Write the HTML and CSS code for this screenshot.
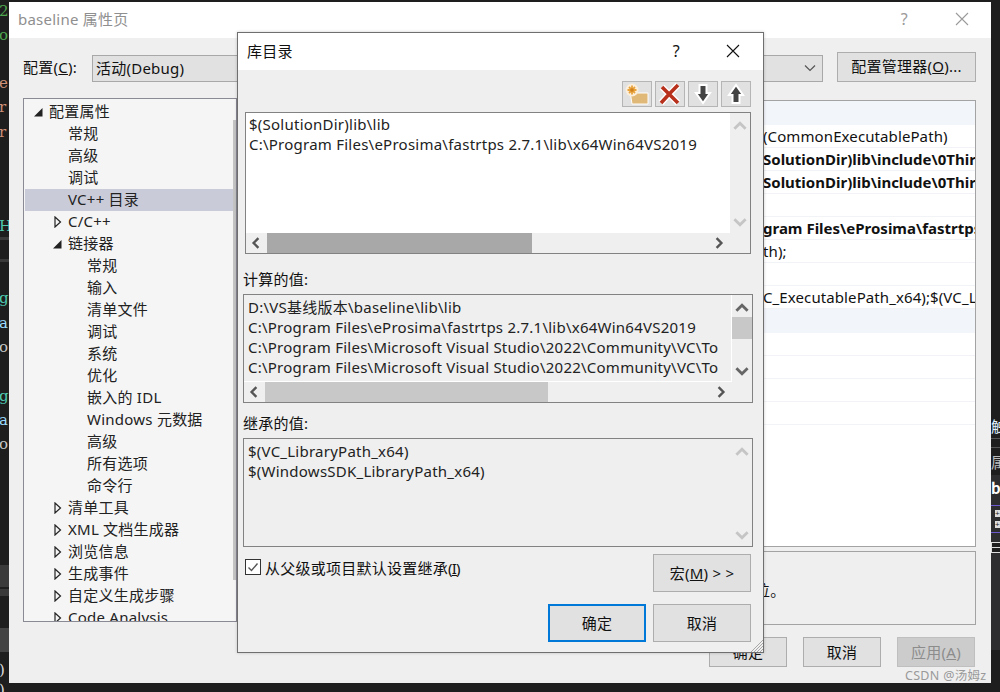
FILE: index.html
```html
<!DOCTYPE html>
<html lang="zh">
<head>
<meta charset="utf-8">
<title>baseline 属性页</title>
<link rel="stylesheet" href="styles.css">
</head>
<body>
<svg class="defs" width="0" height="0" aria-hidden="true">
  <symbol id="open" viewBox="0 0 8 12"><path d="M1 1 L6.5 6 L1 11 Z" fill="none" stroke="#222" stroke-width="1.2"/></symbol>
  <symbol id="down" viewBox="0 0 9 9"><path d="M0 8.5 H8.5 V0 Z" fill="#222"/></symbol>
  <symbol id="cl" viewBox="0 0 10 10"><path d="M7 1 L3 5 L7 9" fill="none" stroke="currentColor" stroke-width="2"/></symbol>
  <symbol id="cr" viewBox="0 0 10 10"><path d="M3 1 L7 5 L3 9" fill="none" stroke="currentColor" stroke-width="2"/></symbol>
  <symbol id="cu" viewBox="0 0 10 10"><path d="M1 7 L5 3 L9 7" fill="none" stroke="currentColor" stroke-width="2"/></symbol>
  <symbol id="cd" viewBox="0 0 10 10"><path d="M1 3 L5 7 L9 3" fill="none" stroke="currentColor" stroke-width="2"/></symbol>
</svg>

<div class="strip-left">
  <span class="g l1">2</span><span class="g l2">o</span><span class="o l3">e</span><span class="o l4">r</span><span class="o l5">r</span>
  <span class="t l6">H</span><span class="t l7">g</span><span class="b l8">a</span><span class="p l9">o</span>
  <span class="t l10">g</span><span class="b l11">a</span><span class="p l12">o</span>
  <span class="w l13">)</span><span class="w l14">)</span>
  <i class="bar b1"></i><i class="bar b2"></i><i class="bar b3"></i><i class="bar b4"></i><i class="bar b5"></i>
</div>
<div class="strip-right">
  <i class="rb rb1"></i>
  <span class="rt r1">触</span><i class="rl rl1"></i><i class="rl rl2"></i><span class="rt r2">属</span>
  <span class="rt r3">b</span><i class="rp rp1"></i><span class="rbox rb-a">+</span><span class="rbox rb-b">+</span><i class="rp rp2"></i><i class="rw"></i>
</div>

<section class="parent">
  <header class="titlebar ptitle">
    <span class="ptext">baseline 属性页</span>
    <span class="pctl">?</span>
    <svg class="pclose" width="16" height="16" viewBox="0 0 16 16"><path d="M2 2 L14 14 M14 2 L2 14" stroke="#9a9a9a" stroke-width="1.1"/></svg>
  </header>
  <div class="pbody">
    <div class="cfg">
      <label class="cfg-label">配置(<u>C</u>):</label>
      <div class="combo"><span>活动(Debug)</span><svg width="12" height="8" viewBox="0 0 12 8"><path d="M1 1.5 L6 6.5 L11 1.5" fill="none" stroke="#555" stroke-width="1.2"/></svg></div>
      <button class="btn mgr">配置管理器(<u>O</u>)...</button>
    </div>
    <div class="main">
      <nav class="tree">
        <div class="row lv0"><svg class="tw" width="9" height="9"><use href="#down"/></svg>配置属性</div>
        <div class="row lv1">常规</div>
        <div class="row lv1">高级</div>
        <div class="row lv1">调试</div>
        <div class="row lv1 sel">VC++ 目录</div>
        <div class="row lv1"><svg class="ta" width="8" height="12"><use href="#open"/></svg>C/C++</div>
        <div class="row lv1"><svg class="td" width="9" height="9"><use href="#down"/></svg>链接器</div>
        <div class="row lv2">常规</div>
        <div class="row lv2">输入</div>
        <div class="row lv2">清单文件</div>
        <div class="row lv2">调试</div>
        <div class="row lv2">系统</div>
        <div class="row lv2">优化</div>
        <div class="row lv2">嵌入的 IDL</div>
        <div class="row lv2">Windows 元数据</div>
        <div class="row lv2">高级</div>
        <div class="row lv2">所有选项</div>
        <div class="row lv2">命令行</div>
        <div class="row lv1"><svg class="ta" width="8" height="12"><use href="#open"/></svg>清单工具</div>
        <div class="row lv1"><svg class="ta" width="8" height="12"><use href="#open"/></svg>XML 文档生成器</div>
        <div class="row lv1"><svg class="ta" width="8" height="12"><use href="#open"/></svg>浏览信息</div>
        <div class="row lv1"><svg class="ta" width="8" height="12"><use href="#open"/></svg>生成事件</div>
        <div class="row lv1"><svg class="ta" width="8" height="12"><use href="#open"/></svg>自定义生成步骤</div>
        <div class="row lv1"><svg class="ta" width="8" height="12"><use href="#open"/></svg>Code Analysis</div>
        <i class="tree-thumb"></i>
      </nav>
      <div class="rcol">
        <div class="grid">
          <div class="gr band"></div>
          <div class="gr"><span class="v">(CommonExecutablePath)</span></div>
          <div class="gr bold"><span class="v">SolutionDir)lib\include\0ThirdParty</span></div>
          <div class="gr bold"><span class="v">SolutionDir)lib\include\0ThirdParty</span></div>
          <div class="gr"></div>
          <div class="gr bold"><span class="v">gram Files\eProsima\fastrtps 2.7.1</span></div>
          <div class="gr"><span class="v">th);</span></div>
          <div class="gr"></div>
          <div class="gr"><span class="v">C_ExecutablePath_x64);$(VC_LibraryPath)</span></div>
          <div class="gr band"></div>
          <div class="gr"></div>
          <div class="gr"></div>
          <div class="gr"></div>
          <div class="gr"></div>
        </div>
        <div class="desc"><span class="desc-t">位。</span></div>
      </div>
    </div>
    <footer class="pfoot">
      <button class="btn fb">确定</button>
      <button class="btn fb">取消</button>
      <button class="btn fb dis">应用(<u>A</u>)</button>
    </footer>
  </div>
</section>

<section class="child">
  <header class="titlebar ctitle">
    <span class="ctext">库目录</span>
    <span class="cq">?</span>
    <svg class="cclose" width="14" height="14" viewBox="0 0 14 14"><path d="M1 1 L13 13 M13 1 L1 13" stroke="#111" stroke-width="1.1"/></svg>
  </header>
  <div class="cbody">
    <div class="tools">
      <button class="tool"><svg width="26" height="24" viewBox="0 0 26 24"><path d="M6 9 H11 L13 11 H24 V22 H8 Z" fill="#e0b877" stroke="#fff" stroke-width="1"/><circle cx="8" cy="8" r="6.5" fill="#fbeedb"/><path d="M8 3.5 V12.5 M3.5 8 H12.5 M5 5 L11 11 M11 5 L5 11" stroke="#e8a33d" stroke-width="1.8"/><circle cx="8" cy="8" r="1.8" fill="#d0801c"/></svg></button>
      <button class="tool"><svg width="24" height="24" viewBox="0 0 24 24"><path d="M4 5 Q12 13 20 21 M20 3 Q11 12 3 21" fill="none" stroke="#fff" stroke-width="6.4"/><path d="M4 5 Q12 13 20 21 M20 3 Q11 12 3 21" fill="none" stroke="#b8311c" stroke-width="3.6"/></svg></button>
      <button class="tool"><svg width="24" height="24" viewBox="0 0 24 24"><path d="M8.5 3 H15.5 V11 H19 L12 21 L5 11 H8.5 Z" fill="#444" stroke="#fff" stroke-width="2"/></svg></button>
      <button class="tool"><svg width="24" height="24" viewBox="0 0 24 24"><path d="M8.5 21 H15.5 V13 H19 L12 3 L5 13 H8.5 Z" fill="#444" stroke="#fff" stroke-width="2"/></svg></button>
    </div>

    <div class="lb lb-edit">
      <div class="lb-text white">
        <div>$(SolutionDir)lib\lib</div>
        <div>C:\Program Files\eProsima\fastrtps 2.7.1\lib\x64Win64VS2019</div>
      </div>
      <div class="vs faint"><svg width="14" height="14"><use href="#cu"/></svg><span class="vs-fill"></span><svg width="14" height="14"><use href="#cd"/></svg></div>
      <div class="hs"><svg width="12" height="12"><use href="#cl"/></svg><i class="hs-thumb dark t1"></i><svg class="hr" width="12" height="12"><use href="#cr"/></svg></div>
      <i class="corner"></i>
    </div>

    <div class="cap c1">计算的值:</div>
    <div class="lb lb-calc">
      <div class="lb-text">
        <div>D:\VS基线版本\baseline\lib\lib</div>
        <div>C:\Program Files\eProsima\fastrtps 2.7.1\lib\x64Win64VS2019</div>
        <div>C:\Program Files\Microsoft Visual Studio\2022\Community\VC\To</div>
        <div>C:\Program Files\Microsoft Visual Studio\2022\Community\VC\To</div>
      </div>
      <div class="vs"><svg width="14" height="14"><use href="#cu"/></svg><i class="vs-thumb"></i><span class="vs-fill"></span><svg width="14" height="14"><use href="#cd"/></svg></div>
      <div class="hs"><svg width="12" height="12"><use href="#cl"/></svg><i class="hs-thumb t2"></i><svg class="hr" width="12" height="12"><use href="#cr"/></svg></div>
      <i class="corner"></i>
    </div>

    <div class="cap c2">继承的值:</div>
    <div class="lb lb-inh">
      <div class="lb-text tall">
        <div>$(VC_LibraryPath_x64)</div>
        <div>$(WindowsSDK_LibraryPath_x64)</div>
      </div>
      <div class="vs faint"><svg width="14" height="14"><use href="#cu"/></svg><span class="vs-fill"></span><svg width="14" height="14"><use href="#cd"/></svg></div>
    </div>

    <div class="bottom">
      <label class="check"><span class="box"><svg width="14" height="14" viewBox="0 0 14 14"><path d="M2.5 7.5 L5.5 10.5 L11.5 3.5" fill="none" stroke="#555" stroke-width="1.4"/></svg></span><span>从父级或项目默认设置继承(<u class="tight">I</u>)</span></label>
      <button class="btn macro">宏(<u>M</u>) &gt; &gt;</button>
    </div>
    <div class="cfoot">
      <button class="btn cf primary">确定</button>
      <button class="btn cf">取消</button>
    </div>
  </div>
  <svg class="grip" width="13" height="13" viewBox="0 0 13 13"><path d="M13 1 L1 13 M13 4 L4 13 M13 7 L7 13 M13 10 L10 13" stroke="#a8a8a8" stroke-width="1"/></svg>
</section>

<div class="watermark">CSDN @汤姆z</div>
</body>
</html>
```
FILE: styles.css
```css
* { box-sizing: border-box; }
html, body { margin: 0; height: 100%; }
body {
  width: 1000px; height: 692px; position: relative; overflow: hidden;
  background: #1e1e1e; color: #111;
  font: 15px/20px "Noto Sans", "Noto Sans CJK SC", sans-serif;
  letter-spacing: .24px;
}
.defs { position: absolute; }
button { font: inherit; color: inherit; padding: 0; letter-spacing: inherit; }
u { text-underline-offset: 1px; }
u.tight { margin: 0 -1px; }

/* background editor slivers */
.strip-left { position: absolute; left: 0; top: 0; width: 9px; height: 692px; overflow: hidden; font: 15px/20px "DejaVu Serif", serif; }
.strip-left span { position: absolute; left: -1px; }
.strip-left .g { color: #4ea64e; }
.strip-left .o { color: #ce9178; }
.strip-left .t { color: #4ec9b0; }
.strip-left .b { color: #9cdcfe; }
.strip-left .p { color: #c8c8c8; }
.strip-left .w { color: #ddd; }
.l1 { top: 1px; } .l2 { top: 25px; } .l3 { top: 73px; } .l4 { top: 97px; } .l5 { top: 122px; }
.l6 { top: 216px; } .l7 { top: 288px; } .l8 { top: 313px; } .l9 { top: 337px; }
.l10 { top: 386px; } .l11 { top: 410px; } .l12 { top: 434px; }
.l13 { top: 660px; } .l14 { top: 680px; }
.bar { position: absolute; left: 0; width: 9px; display: block; background: #3a3a3a; }
.b1 { top: 237px; height: 3px; } .b2 { top: 259px; height: 3px; }
.b3 { top: 565px; height: 22px; } .b4 { top: 589px; height: 7px; }
.b5 { top: 628px; height: 24px; background: #444; }

.strip-right { position: absolute; right: 0; top: 0; width: 9px; height: 692px; overflow: hidden; }
.rb { position: absolute; left: 0; width: 9px; display: block; top: 475px; height: 175px; background: #2d2d30; }
.rt { position: absolute; left: 0; font: 15px/20px "Noto Sans CJK SC", sans-serif; color: #dfefff; }
.r1 { top: 416px; } .r2 { top: 452px; color: #bbb; } .r3 { top: 478px; font-weight: 700; color: #fff; }
.rl { position: absolute; left: 0; width: 9px; height: 1px; background: #555; display: block; }
.rl1 { top: 438px; } .rl2 { top: 447px; }
.rp { position: absolute; left: 0; width: 9px; height: 1px; background: #6a5acd; display: block; }
.rp1 { top: 505px; } .rp2 { top: 532px; }
.rbox { position: absolute; left: 4px; width: 6px; height: 7px; background: #ddd; color: #222; font: 8px/7px "Liberation Sans", sans-serif; }
.rb-a { top: 510px; } .rb-b { top: 521px; }
.rw { position: absolute; left: 0; top: 542px; width: 9px; height: 11px; border: 1px solid #ddd; border-right: 0; display: block; background: linear-gradient(#1e1e1e 4px, #ddd 4px, #ddd 5px, #1e1e1e 5px); }

/* parent window */
.parent { position: absolute; left: 9px; top: 2px; width: 982px; height: 681px; background: #efefef; display: flex; flex-direction: column; }
.titlebar { background: #fff; display: flex; align-items: center; }
.ptitle { height: 36px; padding: 0 0 2px 9px; }
.ptext { color: #8f8f8f; flex: 1; }
.pctl { color: #9a9a9a; font-size: 16px; margin-right: 46px; }
.pclose { margin-right: 21px; }
.pbody { flex: 1; padding: 14px 15px 0 14px; display: flex; flex-direction: column; }
.cfg { display: flex; align-items: center; height: 30px; }
.cfg-label { width: 69px; }
.combo { width: 731px; height: 27px; margin-top: 2px; background: #e1e1e1; border: 1px solid #a8a8a8; display: flex; align-items: center; justify-content: space-between; padding: 0 6px 0 3px; }
.btn { background: #e1e1e1; border: 1px solid #adadad; display: block; text-align: center; }
.mgr { width: 139px; height: 30px; margin-left: 14px; padding-bottom: 2px; }
.main { display: flex; margin-top: 16px; align-items: flex-start; }
.tree { position: relative; width: 214px; height: 524px; background: #f5f5f5; border: 1px solid #8a8a94; overflow: hidden; padding: 2px 3px 0 1px; }
.row { height: 22px; line-height: 20px; white-space: nowrap; position: relative; color: #222; }
.lv0 { padding-left: 24px; }
.lv1 { padding-left: 43px; }
.lv2 { padding-left: 62px; }
.sel { background: #cacbd8; width: 208px; }
.tw { position: absolute; left: 9px; top: 7px; }
.ta { position: absolute; left: 29px; top: 5px; }
.td { position: absolute; left: 28px; top: 7px; }
.tree-thumb { position: absolute; right: 0; top: 21px; width: 3px; height: 460px; background: #c4c4c4; display: block; }
.rcol { width: 731px; margin: 2px 0 0 8px; }
.grid { height: 447px; background: #fff; border: 1px solid #a3a3a3; overflow: hidden; }
.gr { height: 23px; line-height: 22px; border-bottom: 1px solid #f2f3f7; white-space: nowrap; overflow: hidden; letter-spacing: .1px; }
.gr.band { height: 24px; background: #f2f5fa; border: 0; }
.gr.bold { font-weight: 700; letter-spacing: 0; }
.v { display: block; color: #111; margin-left: 517px; }
.desc { height: 74px; margin-top: 4px; border: 1px solid #a3a3a3; padding: 28px 0 0 509px; }
.pfoot { display: flex; justify-content: flex-end; gap: 16px; margin-top: 12px; padding-right: 1px; }
.fb { width: 78px; height: 30px; }
.dis { background: #cccccc; color: #8c8c8c; border-color: #bfbfbf; }

/* child window */
.child { position: absolute; left: 237px; top: 32px; width: 527px; height: 621px; background: #efefef; border: 1px solid #6f6f6f; box-shadow: 0 0 3px rgba(0,0,0,.2); display: flex; flex-direction: column; }
.ctitle { height: 37px; padding: 0 0 2px 9px; }
.ctext { flex: 1; }
.cq { font-size: 16px; margin-right: 46px; }
.cclose { margin-right: 23px; }
.cbody { flex: 1; padding: 11px 12px 0 5px; display: flex; flex-direction: column; }
.tools { display: flex; justify-content: flex-end; gap: 3px; height: 26px; }
.tool { width: 30px; height: 26px; background: #e1e1e1; border: 1px solid #b5b5b5; display: flex; align-items: center; justify-content: center; }
.lb { position: relative; display: grid; grid-template-columns: 1fr 20px; grid-template-rows: 1fr 20px; border: 1px solid #828282; }
.lb-edit { margin: 5px 0 0 2px; height: 142px; width: 506px; }
.lb-calc { margin-top: 5px; height: 109px; width: 510px; }
.lb-inh { margin-top: 5px; height: 109px; width: 510px; grid-template-rows: 1fr; }
.lb-text { padding: 0 0 0 4px; overflow: hidden; white-space: nowrap; color: #222; }
.lb-calc .lb-text { padding-top: 2px; border-right: 1px solid #fff; border-bottom: 1px solid #fff; }
.lb-inh .lb-text { padding-top: 2px; }
.lb-edit .lb-text { padding: 1px 0 0 3px; }
.white { background: #fff; }
.vs { display: flex; flex-direction: column; align-items: center; padding: 6px 0 4px; color: #666; position: relative; }
.vs-thumb { width: 20px; height: 22px; background: #c8c8c8; display: block; margin-top: 2px; flex: none; }
.vs-fill { flex: 1; }
.vs.faint { color: #c5c5c5; }
.hs { display: flex; align-items: center; background: #efefef; color: #555; padding-left: 4px; grid-column: 1; }
.hs-thumb { display: block; height: 20px; background: #c8c8c8; margin-left: 5px; }
.hs-thumb.dark { background: #a8a8a8; }
.t1 { width: 265px; }
.t2 { width: 283px; }
.hr { margin-left: auto; margin-right: 5px; }
.corner { display: block; background: #efefef; }
.cap { line-height: 20px; }
.c1 { margin-top: 15px; }
.c2 { margin-top: 10px; }
.bottom { display: flex; justify-content: space-between; margin-top: 7px; height: 38px; }
.check { display: flex; align-items: flex-start; gap: 4px; margin: 4px 0 0 2px; }
.box { width: 16px; height: 16px; margin-top: 1px; border: 1px solid #333; background: #fff; display: flex; align-items: center; justify-content: center; }
.macro { width: 98px; height: 38px; }
.cfoot { display: flex; justify-content: flex-end; gap: 7px; margin-top: 12px; }
.cf { width: 98px; height: 38px; }
.primary { border: 2px solid #0078d7; }
.grip { position: absolute; right: 0; bottom: 0; }

.watermark { position: absolute; left: 905px; top: 667px; color: #9a9a9a; font-size: 12.5px; letter-spacing: .3px; line-height: 18px; }
```
